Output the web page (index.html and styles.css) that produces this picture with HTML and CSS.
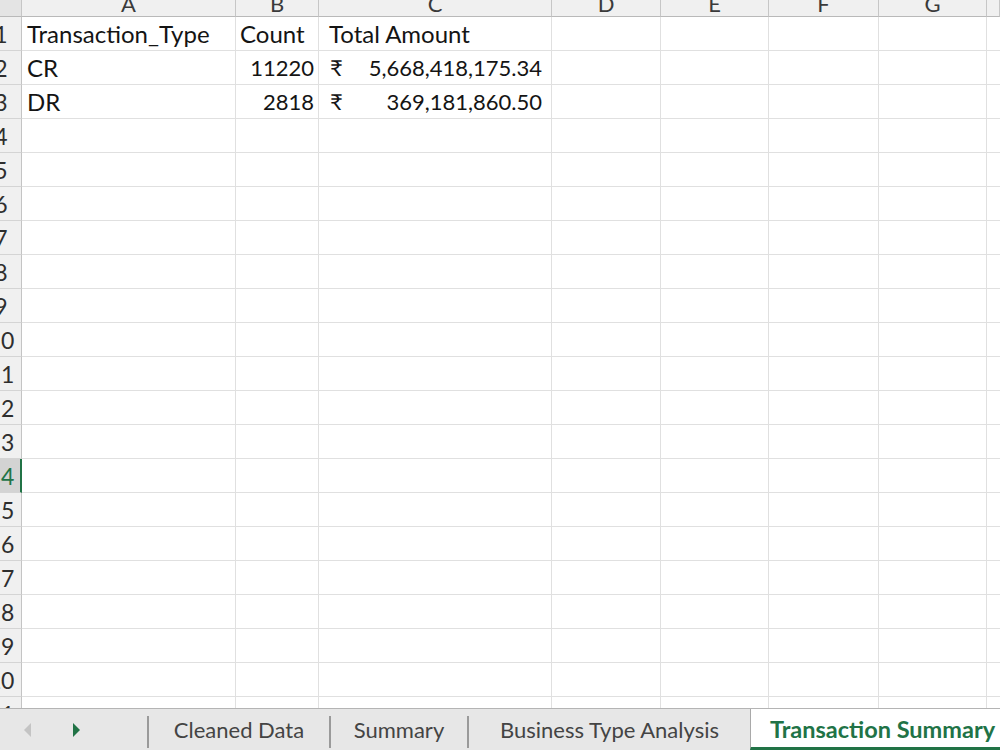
FILE: index.html
```html
<!DOCTYPE html>
<html>
<head>
<meta charset="utf-8">
<link rel="stylesheet" href="styles.css">
</head>
<body>
<div class="sheet">
  <div class="row hdr">
    <div class="cell rh corner"></div>
    <div class="cell ca"><span>A</span></div>
    <div class="cell cb"><span>B</span></div>
    <div class="cell cc"><span>C</span></div>
    <div class="cell cd"><span>D</span></div>
    <div class="cell ce"><span>E</span></div>
    <div class="cell cf"><span>F</span></div>
    <div class="cell cg"><span>G</span></div>
    <div class="cell chh"></div>
  </div>
  <div class="row">
    <div class="cell rh"><span>1</span></div>
    <div class="cell ca">Transaction_Type</div>
    <div class="cell cb">Count</div>
    <div class="cell cc">Total Amount</div>
    <div class="cell cd"></div><div class="cell ce"></div><div class="cell cf"></div><div class="cell cg"></div><div class="cell chh"></div>
  </div>
  <div class="row">
    <div class="cell rh"><span>2</span></div>
    <div class="cell ca">CR</div>
    <div class="cell cb num">11220</div>
    <div class="cell cc acct"><span>₹</span><span>5,668,418,175.34</span></div>
    <div class="cell cd"></div><div class="cell ce"></div><div class="cell cf"></div><div class="cell cg"></div><div class="cell chh"></div>
  </div>
  <div class="row">
    <div class="cell rh"><span>3</span></div>
    <div class="cell ca">DR</div>
    <div class="cell cb num">2818</div>
    <div class="cell cc acct"><span>₹</span><span>369,181,860.50</span></div>
    <div class="cell cd"></div><div class="cell ce"></div><div class="cell cf"></div><div class="cell cg"></div><div class="cell chh"></div>
  </div>
  <div class="row"><div class="cell rh"><span>4</span></div><div class="cell ca"></div><div class="cell cb"></div><div class="cell cc"></div><div class="cell cd"></div><div class="cell ce"></div><div class="cell cf"></div><div class="cell cg"></div><div class="cell chh"></div></div>
  <div class="row"><div class="cell rh"><span>5</span></div><div class="cell ca"></div><div class="cell cb"></div><div class="cell cc"></div><div class="cell cd"></div><div class="cell ce"></div><div class="cell cf"></div><div class="cell cg"></div><div class="cell chh"></div></div>
  <div class="row"><div class="cell rh"><span>6</span></div><div class="cell ca"></div><div class="cell cb"></div><div class="cell cc"></div><div class="cell cd"></div><div class="cell ce"></div><div class="cell cf"></div><div class="cell cg"></div><div class="cell chh"></div></div>
  <div class="row"><div class="cell rh"><span>7</span></div><div class="cell ca"></div><div class="cell cb"></div><div class="cell cc"></div><div class="cell cd"></div><div class="cell ce"></div><div class="cell cf"></div><div class="cell cg"></div><div class="cell chh"></div></div>
  <div class="row"><div class="cell rh"><span>8</span></div><div class="cell ca"></div><div class="cell cb"></div><div class="cell cc"></div><div class="cell cd"></div><div class="cell ce"></div><div class="cell cf"></div><div class="cell cg"></div><div class="cell chh"></div></div>
  <div class="row"><div class="cell rh"><span>9</span></div><div class="cell ca"></div><div class="cell cb"></div><div class="cell cc"></div><div class="cell cd"></div><div class="cell ce"></div><div class="cell cf"></div><div class="cell cg"></div><div class="cell chh"></div></div>
  <div class="row"><div class="cell rh"><span>10</span></div><div class="cell ca"></div><div class="cell cb"></div><div class="cell cc"></div><div class="cell cd"></div><div class="cell ce"></div><div class="cell cf"></div><div class="cell cg"></div><div class="cell chh"></div></div>
  <div class="row"><div class="cell rh"><span>11</span></div><div class="cell ca"></div><div class="cell cb"></div><div class="cell cc"></div><div class="cell cd"></div><div class="cell ce"></div><div class="cell cf"></div><div class="cell cg"></div><div class="cell chh"></div></div>
  <div class="row"><div class="cell rh"><span>12</span></div><div class="cell ca"></div><div class="cell cb"></div><div class="cell cc"></div><div class="cell cd"></div><div class="cell ce"></div><div class="cell cf"></div><div class="cell cg"></div><div class="cell chh"></div></div>
  <div class="row"><div class="cell rh"><span>13</span></div><div class="cell ca"></div><div class="cell cb"></div><div class="cell cc"></div><div class="cell cd"></div><div class="cell ce"></div><div class="cell cf"></div><div class="cell cg"></div><div class="cell chh"></div></div>
  <div class="row"><div class="cell rh sel"><span>14</span></div><div class="cell ca"></div><div class="cell cb"></div><div class="cell cc"></div><div class="cell cd"></div><div class="cell ce"></div><div class="cell cf"></div><div class="cell cg"></div><div class="cell chh"></div></div>
  <div class="row"><div class="cell rh"><span>15</span></div><div class="cell ca"></div><div class="cell cb"></div><div class="cell cc"></div><div class="cell cd"></div><div class="cell ce"></div><div class="cell cf"></div><div class="cell cg"></div><div class="cell chh"></div></div>
  <div class="row"><div class="cell rh"><span>16</span></div><div class="cell ca"></div><div class="cell cb"></div><div class="cell cc"></div><div class="cell cd"></div><div class="cell ce"></div><div class="cell cf"></div><div class="cell cg"></div><div class="cell chh"></div></div>
  <div class="row"><div class="cell rh"><span>17</span></div><div class="cell ca"></div><div class="cell cb"></div><div class="cell cc"></div><div class="cell cd"></div><div class="cell ce"></div><div class="cell cf"></div><div class="cell cg"></div><div class="cell chh"></div></div>
  <div class="row"><div class="cell rh"><span>18</span></div><div class="cell ca"></div><div class="cell cb"></div><div class="cell cc"></div><div class="cell cd"></div><div class="cell ce"></div><div class="cell cf"></div><div class="cell cg"></div><div class="cell chh"></div></div>
  <div class="row"><div class="cell rh"><span>19</span></div><div class="cell ca"></div><div class="cell cb"></div><div class="cell cc"></div><div class="cell cd"></div><div class="cell ce"></div><div class="cell cf"></div><div class="cell cg"></div><div class="cell chh"></div></div>
  <div class="row"><div class="cell rh"><span>20</span></div><div class="cell ca"></div><div class="cell cb"></div><div class="cell cc"></div><div class="cell cd"></div><div class="cell ce"></div><div class="cell cf"></div><div class="cell cg"></div><div class="cell chh"></div></div>
  <div class="row"><div class="cell rh"><span>21</span></div><div class="cell ca"></div><div class="cell cb"></div><div class="cell cc"></div><div class="cell cd"></div><div class="cell ce"></div><div class="cell cf"></div><div class="cell cg"></div><div class="cell chh"></div></div>
</div>
<div class="tabbar">
  <div class="nav">
    <svg class="arr" width="8" height="14" viewBox="0 0 8 14"><polygon points="7,0 7,14 0,7" fill="#c4c4c4"/></svg>
    <svg class="arr" width="8" height="14" viewBox="0 0 8 14"><polygon points="0,0 0,14 7,7" fill="#217346"/></svg>
  </div>
  <div class="sep"></div>
  <div class="tab t1">Cleaned Data</div>
  <div class="sep"></div>
  <div class="tab t2">Summary</div>
  <div class="sep"></div>
  <div class="tab t3">Business Type Analysis</div>
  <div class="tab active">Transaction Summary</div>
</div>
</body>
</html>
```
FILE: styles.css
```css
html, body {
  margin: 0;
  padding: 0;
}
body {
  width: 1000px;
  height: 750px;
  overflow: hidden;
  background: #ffffff;
  font-family: "Lato", "Noto Sans", sans-serif;
}
.sheet {
  height: 708px;
  overflow: hidden;
}
.row {
  display: flex;
  height: 34px;
}
.cell {
  box-sizing: border-box;
  flex: none;
  display: flex;
  align-items: flex-end;
  border-right: 1px solid #e0e0e0;
  border-bottom: 1px solid #e0e0e0;
  padding: 0 4px 4px 5px;
  font-size: 24px;
  line-height: 1;
  color: #141414;
  white-space: nowrap;
  overflow: hidden;
}
.ca { width: 214px; }
.cb { width: 83px; padding-left: 4px; }
.cc { width: 233px; padding-left: 10px; }
.cd { width: 109px; }
.ce { width: 108px; }
.cf { width: 110px; }
.cg { width: 108px; }
.chh { flex: 1; border-right: none; }
.num { justify-content: flex-end; font-size: 22px; padding-bottom: 5px; }
.acct { justify-content: space-between; padding-left: 11px; padding-right: 9px; font-size: 22px; padding-bottom: 5px; }

.rh {
  width: 22px;
  padding: 0 0 4px 0;
  background: #f0f0f0;
  border-right: 1px solid #c4c4c4;
  border-bottom: 1px solid #d4d4d4;
  color: #2e2e2e;
  font-size: 23px;
}
.rh span {
  flex: none;
  width: 30px;
  margin-left: -14px;
  text-align: center;
}
.rh.sel {
  background: #d3d3d3;
  color: #217346;
  border-right: 2px solid #217346;
}

.hdr {
  height: 17px;
}
.hdr .cell {
  background: #f0f0f0;
  border-right: 1px solid #c6c6c6;
  border-bottom: 1px solid #b9b9b9;
  justify-content: center;
  padding: 0 0 1px 0;
  font-size: 22px;
  color: #3a3a3a;
}
.hdr .corner {
  background: #e4e4e4;
}

.tabbar {
  display: flex;
  height: 42px;
  box-sizing: border-box;
  background: #e7e7e7;
  border-top: 1px solid #b4b4b4;
  font-family: "Lato", "Noto Sans", sans-serif;
}
.nav {
  width: 147px;
  display: flex;
  align-items: center;
  gap: 41px;
  padding-left: 24px;
  box-sizing: border-box;
}
.sep {
  width: 2px;
  height: 32px;
  align-self: flex-end;
  margin-bottom: 2px;
  background: #9a9a9a;
}
.tab {
  display: flex;
  align-items: center;
  justify-content: center;
  font-size: 22px;
  color: #444444;
  padding-bottom: 1px;
  white-space: nowrap;
}
.t1 { width: 180px; }
.t2 { width: 136px; }
.t3 { width: 281px; }
.active {
  flex: 1;
  justify-content: flex-start;
  padding-left: 19px;
  padding-top: 2px;
  background: #ffffff;
  border-left: 1px solid #a9a9a9;
  border-bottom: 3px solid #217346;
  color: #217346;
  font-size: 23.5px;
  font-weight: bold;
  overflow: hidden;
}
```
